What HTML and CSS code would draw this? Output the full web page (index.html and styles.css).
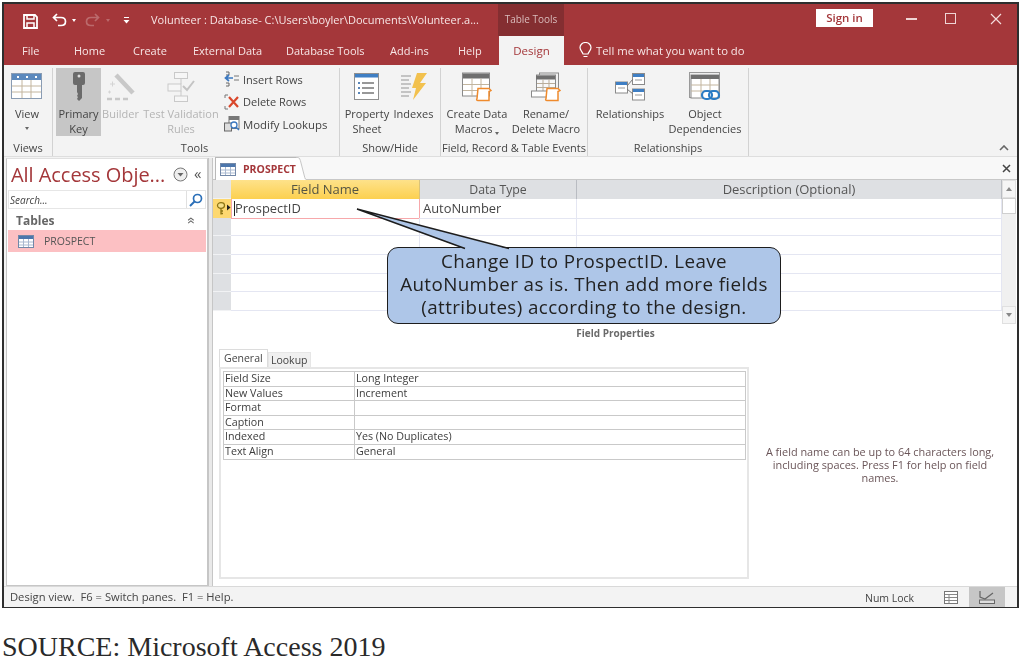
FILE: index.html
```html
<!DOCTYPE html>
<html lang="en">
<head>
<meta charset="utf-8">
<title>Volunteer : Database</title>
<link rel="stylesheet" href="styles.css">
</head>
<body>
<div class="window">
  <header class="titlebar">
    <svg class="qat-save" width="15" height="15" viewBox="0 0 15 15"><path d="M1 1h11l2 2v11H1z" fill="none" stroke="#fff" stroke-width="1.8"/><path d="M4 1v4h7V1" fill="none" stroke="#fff" stroke-width="1.5"/><path d="M4 14V9h7v5" fill="none" stroke="#fff" stroke-width="1.5"/></svg>
    <svg class="qat-undo" width="15" height="14" viewBox="0 0 15 14"><path d="M5 1 1.500 4.500 5 8M2 4.500h7c6 0 6 8 0 8H6" fill="none" stroke="#fff" stroke-width="1.700"/></svg>
    <span class="caret qat-c1"></span>
    <svg class="qat-redo" width="15" height="14" viewBox="0 0 15 14"><path d="M10 1l3.500 3.500L10 8M13 4.500H6c-6 0-6 8 0 8h3" fill="none" stroke="#bb6a6c" stroke-width="1.700"/></svg>
    <span class="caret dim qat-c2"></span>
    <svg class="qat-more" width="7" height="7" viewBox="0 0 7 7"><path d="M1 .5h5" stroke="#fff"/><path d="M.5 3h6L3.500 6.500z" fill="#fff"/></svg>
    <span class="doc-title">Volunteer : Database- C:\Users\boyler\Documents\Volunteer.a...</span>
    <span class="tools-tab">Table Tools</span>
    <span class="signin">Sign in</span>
    <span class="win-min"></span>
    <span class="win-max"></span>
    <svg class="win-close" width="12" height="12" viewBox="0 0 12 12"><path d="M1 1l10 10M11 1 1 11" stroke="#f4dcdc" stroke-width="1.200"/></svg>
  </header>

  <nav class="tabs">
    <span class="tab t-file">File</span>
    <span class="tab t-home">Home</span>
    <span class="tab t-create">Create</span>
    <span class="tab t-ext">External Data</span>
    <span class="tab t-db">Database Tools</span>
    <span class="tab t-add">Add-ins</span>
    <span class="tab t-help">Help</span>
    <span class="tab t-design">Design</span>
    <svg class="bulb" width="13" height="17" viewBox="0 0 13 17"><path d="M4 12C3.500 9.500 1 8.500 1 5.500a5.500 5 0 0 1 11 0C12 8.500 9.500 9.500 9 12zM4.500 14.500h4" fill="none" stroke="#fff" stroke-width="1.200"/></svg>
    <span class="tab t-tell">Tell me what you want to do</span>
  </nav>

  <section class="ribbon">
    <div class="group g-views">
      <div class="group-body">
        <div class="rbtn b-view">
          <svg class="ricon" width="32" height="28" viewBox="0 0 32 28"><rect x=".5" y=".5" width="30" height="25" fill="#fff" stroke="#8a9cb3"/><rect x="1" y="1" width="29" height="6" fill="#5b89bd"/><path d="M1 13h29M1 19h29M11 7v18M20 7v18" stroke="#c3b59e"/><path d="M6 4h2M15 4h2M24 4h2" stroke="#fff" stroke-width="2"/></svg>
          <span class="rlabel">View</span>
          <span class="caret gray"></span>
        </div>
      </div>
      <div class="group-label">Views</div>
    </div>

    <div class="group g-tools">
      <div class="group-body">
        <div class="rbtn b-key active">
          <svg class="ricon" width="16" height="30" viewBox="0 0 16 30"><path d="M2 2q0-2 2-2h8q2 0 2 2v9q0 2-2 2h-1v13l-3 3-2-2 1-2-1-1 1-2-1-2v-7H4q-2 0-2-2z" fill="#6b6b6b"/><circle cx="8" cy="4" r="1.500" fill="#ddd"/></svg>
          <span class="rlabel">Primary</span><span class="rlabel">Key</span>
        </div>
        <div class="rbtn b-builder dim-btn">
          <svg class="ricon" width="30" height="30" viewBox="0 0 30 30"><path d="M10 3l17 18" stroke="#c8c8c8" stroke-width="4.500"/><path d="M4 12h5M6.500 9.500v5M2 20h3M3.500 18.500v3" stroke="#d4d4d4"/><path d="M1 27h5M9 27h5M17 27h5" stroke="#c8c8c8" stroke-width="2.500"/></svg>
          <span class="rlabel">Builder</span>
        </div>
        <div class="rbtn b-test dim-btn">
          <svg class="ricon" width="28" height="30" viewBox="0 0 28 30"><g fill="#f6f6f6" stroke="#c9c9c9"><rect x="7.500" y=".5" width="13" height="6"/><rect x="1" y="12" width="13" height="7"/><rect x="7.500" y="24" width="13" height="5.500"/></g><path d="M14 7v5M14 19v5" stroke="#c9c9c9"/><path d="M16 14l4 4 7-9" fill="none" stroke="#c4c4c4" stroke-width="2"/></svg>
          <span class="rlabel">Test Validation</span><span class="rlabel">Rules</span>
        </div>
        <div class="small-stack">
          <div class="sbtn">
            <svg width="16" height="16" viewBox="0 0 16 16"><path d="M2 1h3v3H2M2 12h3v3H2" fill="none" stroke="#666"/><path d="M9 7H2M5 4 1.500 7 5 10" fill="none" stroke="#3b78c0" stroke-width="1.700"/><path d="M10 5h5M10 9h5" stroke="#777"/></svg>
            <span>Insert Rows</span>
          </div>
          <div class="sbtn">
            <svg width="16" height="16" viewBox="0 0 16 16"><path d="M4 1H1v3M1 12v3h3" fill="none" stroke="#777"/><path d="M5 3l9 10M14 3 5 13" stroke="#d9472b" stroke-width="2.200"/></svg>
            <span>Delete Rows</span>
          </div>
          <div class="sbtn">
            <svg width="16" height="16" viewBox="0 0 16 16"><rect x="5" y=".5" width="10" height="12" fill="#fff" stroke="#777"/><path d="M5 1h10v3H5z" fill="#777"/><rect x=".5" y="7" width="7" height="8" fill="#ddd" stroke="#666"/><circle cx="10" cy="9" r="3" fill="#fff" stroke="#3b78c0" stroke-width="1.300"/><path d="M12 11l3 3" stroke="#3b78c0" stroke-width="1.500"/></svg>
            <span class="wide-text">Modify Lookups</span>
          </div>
        </div>
      </div>
      <div class="group-label tools-label">Tools</div>
    </div>

    <div class="group g-show">
      <div class="group-body">
        <div class="rbtn b-prop">
          <svg class="ricon" width="26" height="28" viewBox="0 0 26 28"><rect x=".5" y=".5" width="24" height="26" fill="#fff" stroke="#8f8f8f"/><rect x="1" y="1" width="23" height="3.500" fill="#3f7fc4"/><path d="M8 10h12M8 15h12M8 20h12" stroke="#777" stroke-width="1.300"/><path d="M4 10h2M4 15h2M4 20h2" stroke="#5a86b8" stroke-width="2"/></svg>
          <span class="rlabel">Property</span><span class="rlabel">Sheet</span>
        </div>
        <div class="rbtn b-idx">
          <svg class="ricon" width="28" height="28" viewBox="0 0 28 28"><path d="M1 3h10M1 7h8M1 11h10M1 15h8M1 19h10M1 23h8" stroke="#b5b5b5" stroke-width="1.300"/><path d="M17 0h10l-7 10h6L13 27l3-12h-4z" fill="#f2c14e"/></svg>
          <span class="rlabel">Indexes</span>
        </div>
      </div>
      <div class="group-label">Show/Hide</div>
    </div>

    <div class="group g-events">
      <div class="group-body">
        <div class="rbtn b-macro">
          <svg class="ricon" width="30" height="29" viewBox="0 0 30 29"><rect x=".5" y=".5" width="27" height="23" fill="#fff" stroke="#8a8a8a"/><rect x="1" y="1" width="26" height="5" fill="#6f6f6f"/><path d="M1 12h26M1 18h26M10 6v18M19 6v18" stroke="#c3b59e"/><path d="M16 16h11l2 2-2 1v9H16q-2 0-1-2z" fill="#fff" stroke="#ef8a2c" stroke-width="1.500"/></svg>
          <span class="rlabel">Create Data</span><span class="rlabel">Macros <i class="caret gray inline"></i></span>
        </div>
        <div class="rbtn b-rename">
          <svg class="ricon" width="30" height="29" viewBox="0 0 30 29"><rect x="8.500" y=".5" width="19" height="17" fill="#f2f2f2" stroke="#8a8a8a"/><rect x="5.500" y="2.500" width="19" height="17" fill="#f8f8f8" stroke="#8a8a8a"/><rect x="5" y="3" width="19" height="4" fill="#6f6f6f"/><path d="M6 11h18M6 15h18M12 7v12M18 7v12" stroke="#b9ad9a"/><rect x=".5" y="18.500" width="20" height="6" fill="#fff" stroke="#8a8a8a"/><path d="M16 16h11l2 2-2 1v9H16q-2 0-1-2z" fill="#fff" stroke="#ef8a2c" stroke-width="1.500"/></svg>
          <span class="rlabel">Rename/</span><span class="rlabel">Delete Macro</span>
        </div>
      </div>
      <div class="group-label">Field, Record &amp; Table Events</div>
    </div>

    <div class="group g-rel">
      <div class="group-body">
        <div class="rbtn b-rels">
          <svg class="ricon" width="30" height="28" viewBox="0 0 30 28"><g fill="#fff" stroke="#8a8a8a"><rect x=".5" y="9" width="12" height="11"/><rect x="17.500" y=".5" width="12" height="11"/><rect x="17.500" y="16" width="12" height="11"/></g><path d="M1 9h11v3H1zM18 1h11v3H18zM18 16h11v3H18z" fill="#3f7fc4"/><path d="M12 13l6-7M12 16l6 5" stroke="#777"/><path d="M3 15h7M20 7h7M20 22h7" stroke="#999"/></svg>
          <span class="rlabel">Relationships</span>
        </div>
        <div class="rbtn b-obj">
          <svg class="ricon" width="32" height="30" viewBox="0 0 32 30"><rect x=".5" y=".5" width="30" height="25" fill="#eee" stroke="#999"/><rect x="2" y="3" width="28" height="23" fill="#fff" stroke="#8a8a8a"/><rect x="2" y="3" width="28" height="4" fill="#6f6f6f"/><path d="M2 13h28M2 19h28M12 7v18M21 7v18" stroke="#c3b59e"/><rect x="13" y="19" width="10" height="8" rx="4" fill="#fff" stroke="#2b7cc4" stroke-width="2.200"/><rect x="20" y="19" width="10" height="8" rx="4" fill="none" stroke="#2b7cc4" stroke-width="2.200"/></svg>
          <span class="rlabel">Object</span><span class="rlabel">Dependencies</span>
        </div>
      </div>
      <div class="group-label">Relationships</div>
    </div>

    <div class="ribbon-rest">
      <svg width="10" height="6" viewBox="0 0 10 6"><path d="M1 5l4-4 4 4" fill="none" stroke="#666" stroke-width="1.600"/></svg>
    </div>
  </section>

  <main class="workspace">
    <aside class="navpane">
      <div class="nav-head">
        <span class="nav-title">All Access Obje...</span>
        <svg width="15" height="15" viewBox="0 0 15 15"><circle cx="7.500" cy="7.500" r="6.500" fill="#eee" stroke="#777"/><path d="M4.500 6h6l-3 3.500z" fill="#666"/></svg>
        <span class="nav-collapse">«</span>
      </div>
      <div class="nav-search">
        <span class="search-text">Search...</span>
        <span class="search-btn"><svg width="14" height="14" viewBox="0 0 14 14"><circle cx="8.500" cy="5.500" r="4" fill="none" stroke="#2b6fb8" stroke-width="1.700"/><path d="M5.500 8.500 1 13" stroke="#2b6fb8" stroke-width="2"/></svg></span>
      </div>
      <div class="nav-section"><span>Tables</span><span class="sec-chev">«</span></div>
      <div class="nav-item">
        <svg class="tbl-icon" width="16" height="13" viewBox="0 0 16 13"><rect x=".5" y=".5" width="15" height="12" fill="#fff" stroke="#7288a8"/><rect x="1" y="1" width="14" height="3" fill="#4c76ac"/><path d="M1 7h14M1 10h14M5.500 4v8M10.500 4v8" stroke="#a9b9d0"/></svg>
        <span>PROSPECT</span>
      </div>
    </aside>
    <div class="splitter"></div>
    <section class="doc">
      <div class="doc-tabs">
        <div class="doc-tab">
          <svg class="tbl-icon" width="16" height="13" viewBox="0 0 16 13"><rect x=".5" y=".5" width="15" height="12" fill="#fff" stroke="#7288a8"/><rect x="1" y="1" width="14" height="3" fill="#4c76ac"/><path d="M1 7h14M1 10h14M5.500 4v8M10.500 4v8" stroke="#a9b9d0"/></svg>
          <span>PROSPECT</span>
          <svg class="tab-end" width="10" height="23" viewBox="0 0 16 23" preserveAspectRatio="none"><path d="M0 0h3q3 0 4 3l7 17q1 2 2 2.500V23H0z" fill="#fff"/><path d="M0 .5h3q3 0 4 3l7 17q1 2 2 2" fill="none" stroke="#b9b9b9"/></svg>
        </div>
        <svg class="doc-close" width="9" height="9" viewBox="0 0 9 9"><path d="M1 1l7 7M8 1 1 8" stroke="#444" stroke-width="1.500"/></svg>
      </div>
      <div class="design">
        <div class="grid">
          <div class="row head">
            <div class="sel corner"></div>
            <div class="hcell current">Field Name</div>
            <div class="hcell h-type">Data Type</div>
            <div class="hcell">Description (Optional)</div>
          </div>
          <div class="row">
            <div class="sel selected">
              <svg width="16" height="14" viewBox="0 0 16 14"><ellipse cx="6" cy="3.500" rx="3.500" ry="2.800" fill="#f5e08a" stroke="#8c7414" stroke-width="1.300"/><path d="M6 6v6.500M6 9h2M6 11.500h2" stroke="#8c7414" stroke-width="1.300" fill="none"/><path d="M12 2.500l3.500 3-3.500 3z" fill="#222"/></svg>
            </div>
            <div class="cell focus"><span class="cursor"></span>ProspectID</div>
            <div class="cell">AutoNumber</div>
            <div class="cell"></div>
          </div>
          <div class="row"><div class="sel"></div><div class="cell"></div><div class="cell"></div><div class="cell"></div></div>
          <div class="row"><div class="sel"></div><div class="cell"></div><div class="cell"></div><div class="cell"></div></div>
          <div class="row"><div class="sel"></div><div class="cell"></div><div class="cell"></div><div class="cell"></div></div>
          <div class="row"><div class="sel"></div><div class="cell"></div><div class="cell"></div><div class="cell"></div></div>
          <div class="row"><div class="sel"></div><div class="cell"></div><div class="cell"></div><div class="cell"></div></div>
        </div>
        <div class="scrollbar">
          <span class="sb-btn"><i class="arrow-up"></i></span>
          <span class="sb-thumb"></span>
          <span class="sb-track"></span>
          <span class="sb-btn"><i class="arrow-down"></i></span>
        </div>
      </div>

      <div class="fp-title">Field Properties</div>
      <div class="props">
        <div class="prop-left">
          <div class="prop-tabs">
            <span class="ptab on">General</span>
            <span class="ptab">Lookup</span>
          </div>
          <div class="prop-box">
            <div class="prop-table">
              <div class="prow"><span>Field Size</span><span>Long Integer</span></div>
              <div class="prow"><span>New Values</span><span>Increment</span></div>
              <div class="prow"><span>Format</span><span></span></div>
              <div class="prow"><span>Caption</span><span></span></div>
              <div class="prow"><span>Indexed</span><span>Yes (No Duplicates)</span></div>
              <div class="prow"><span>Text Align</span><span>General</span></div>
            </div>
          </div>
        </div>
        <p class="help">A field name can be up to 64 characters long, including spaces. Press F1 for help on field names.</p>
      </div>

      <div class="callout">
        <svg class="callout-tail" width="170" height="44" viewBox="0 0 170 44"><path d="M1 1 109 41h44z" fill="#aec6e8"/><path d="M109 40.500 1 1 153 40.500" fill="none" stroke="#1d1d1d" stroke-width="1.500"/></svg>
        <div class="callout-line">Change ID to ProspectID. Leave</div>
        <div class="callout-line">AutoNumber as is. Then add more fields</div>
        <div class="callout-line">(attributes) according to the design.</div>
      </div>
    </section>
  </main>

  <footer class="status">
    <span class="status-text">Design view.&nbsp; F6 = Switch panes.&nbsp; F1 = Help.</span>
    <span class="numlock">Num Lock</span>
    <span class="view-btn"><svg width="14" height="13" viewBox="0 0 14 13"><rect x=".5" y=".5" width="13" height="12" fill="#fff" stroke="#777"/><path d="M1 3.500h12M5 3.500v9M1 6.500h12M1 9.500h12" stroke="#888"/></svg></span>
    <span class="view-btn on"><svg width="16" height="14" viewBox="0 0 16 14"><path d="M1 1v6l5 2 8-6" fill="none" stroke="#666" stroke-width="1.200"/><rect x=".5" y="10" width="15" height="3.500" fill="#ddd" stroke="#666"/></svg></span>
  </footer>
</div>
<p class="source">SOURCE: Microsoft Access 2019</p>
</body>
</html>
```

FILE: styles.css
```css
* { box-sizing: border-box; }
html, body { margin: 0; padding: 0; }
body {
  width: 1020px;
  height: 659px;
  overflow: hidden;
  background: #fff;
  font-family: "Open Sans", "Noto Sans", sans-serif;
  color: #444;
}
.window {
  width: 1017px;
  height: 606px;
  margin: 2px 0 0 2px;
  border: 2px solid #2e2e2e;
  border-bottom-width: 1.500px;
  display: flex;
  flex-direction: column;
  background: #f3f3f3;
  position: relative;
  filter: blur(.35px);
}

/* title bar */
.titlebar {
  height: 32px;
  flex: none;
  background: #a4373a;
  display: flex;
  align-items: center;
  color: #f7e6e6;
  font-size: 11px;
}
.qat-save { margin-left: 19px; margin-top: 2px; }
.qat-undo { margin-left: 14px; }
.caret {
  display: inline-block;
  width: 0; height: 0;
  border-left: 2.500px solid transparent;
  border-right: 2.500px solid transparent;
  border-top: 3px solid #fff;
}
.caret.dim { border-top-color: #bb6a6c; }
.caret.gray { border-top-color: #666; }
.caret.inline { vertical-align: middle; }
.qat-c1 { margin-left: 5px; }
.qat-redo { margin-left: 9px; }
.qat-c2 { margin-left: 6px; }
.qat-more { margin-left: 13px; }
.doc-title { margin-left: 21px; width: 347px; white-space: nowrap; margin-top: -2px; }
.tools-tab {
  width: 66px;
  height: 32px;
  line-height: 31px;
  text-align: center;
  background: #842e31;
  color: #d9bcbc;
  font-size: 10px;
}
.signin {
  margin-left: 252px;
  width: 57px;
  height: 18px;
  margin-top: -4px;
  background: #fff;
  color: #a4373a;
  text-align: center;
  line-height: 18px;
  font-size: 11.500px;
  font-weight: 600;
}
.win-min { width: 11px; height: 1.500px; background: #f0d5d5; margin-left: 33px; margin-top: -2px; }
.win-max { width: 11px; height: 11px; border: 1.200px solid #f0d5d5; margin-left: 28px; margin-top: -3px; }
.win-close { margin-left: 34px; margin-top: -3px; }

/* tabs */
.tabs {
  height: 29px;
  flex: none;
  background: #a4373a;
  display: flex;
  align-items: center;
  color: #f7e6e6;
  font-size: 11px;
  white-space: nowrap;
}
.tab { display: block; }
.t-file { margin-left: 18px; width: 52px; }
.t-home { width: 59px; }
.t-create { width: 60px; }
.t-ext { width: 93px; }
.t-db { width: 104px; }
.t-add { width: 68px; }
.t-help { width: 41px; }
.t-design {
  width: 65px;
  height: 29px;
  line-height: 29px;
  text-align: center;
  background: #f3f3f3;
  color: #a4373a;
  font-size: 11.500px;
}
.bulb { margin-left: 15px; }
.t-tell { margin-left: 4px; font-size: 11.300px; }

/* ribbon */
.ribbon {
  height: 92px;
  flex: none;
  display: flex;
  background: #f3f3f3;
  border-bottom: 1px solid #dedede;
  font-size: 11px;
  color: #444;
}
.group {
  display: flex;
  flex-direction: column;
  margin: 3px 0 0;
  border-right: 1px solid #d2d2d2;
  flex: none;
}
.g-views { width: 49px; }
.g-tools { width: 287px; padding-left: 3px; }
.g-show { width: 101px; }
.g-events { width: 147px; }
.g-rel { width: 161px; }
.group-body { flex: 1; display: flex; min-height: 0; }
.group-label {
  height: 16px;
  flex: none;
  line-height: 16px;
  text-align: center;
  font-size: 11px;
  white-space: nowrap;
}
.tools-label { padding-right: 6px; }
.rbtn {
  display: flex;
  flex-direction: column;
  align-items: center;
  height: 68px;
  flex: none;
  white-space: nowrap;
}
.ricon { height: 32px; margin-top: 3px; margin-bottom: 3px; flex: none; }
.rlabel { height: 15px; line-height: 15px; display: block; }
.rbtn .caret.gray { margin-top: 6px; }
.b-view { width: 38px; margin-left: 4px; }
.b-key { width: 45px; }
.active { background: #c6c6c6; }
.b-builder { width: 39px; }
.b-test { width: 78px; margin-left: 2px; }
.dim-btn { color: #b4b4b4; }
.small-stack { margin-left: 4px; display: flex; flex-direction: column; }
.sbtn { height: 22.500px; display: flex; align-items: center; gap: 3px; white-space: nowrap; }
.wide-text { font-size: 11.400px; }
.b-prop { width: 52px; margin-left: 1px; }
.b-idx { width: 41px; }
.b-macro { width: 68px; margin-left: 2px; }
.b-rename { width: 70px; }
.b-rels { width: 78px; margin-left: 3px; }
.b-obj { width: 72px; }
.ribbon-rest {
  flex: 1;
  display: flex;
  align-items: flex-end;
  justify-content: flex-end;
  padding: 0 8px 5px 0;
}

/* workspace */
.workspace { flex: 1; display: flex; min-height: 0; position: relative; }
.navpane {
  width: 202px;
  margin-left: 2px;
  flex: none;
  background: #fff;
  border: 1px solid #c6c6c6;
  border-top-color: #e0e0e0;
  padding: 0 1px;
  margin-top: 1px;
}
.nav-head {
  height: 31px;
  display: flex;
  align-items: center;
  padding-left: 3px;
  color: #a4373a;
}
.nav-title { font-size: 20px; width: 162px; white-space: nowrap; letter-spacing: -.05px; }
.nav-collapse { margin-left: 6px; font-size: 15px; color: #555; margin-top: -3px; }
.nav-search {
  height: 19px;
  display: flex;
  align-items: center;
  border: 1px solid #e6e6e6;
  background: #fff;
}
.search-text { flex: 1; font-size: 10px; font-style: italic; color: #444; padding-left: 1px; }
.search-btn { width: 19px; height: 17px; border-left: 1px solid #e0e0e0; display: flex; align-items: center; justify-content: center; }
.nav-section {
  height: 21px;
  display: flex;
  align-items: center;
  justify-content: space-between;
  padding: 1px 10px 0 8px;
  font-size: 12px;
  font-weight: 700;
  color: #666;
}
.sec-chev { display: inline-block; transform: rotate(90deg); font-weight: 400; font-size: 14px; }
.nav-item {
  height: 22px;
  display: flex;
  align-items: center;
  gap: 10px;
  padding-left: 10px;
  background: #fcc0c3;
  font-size: 10.500px;
  color: #555;
}
.splitter {
  width: 5px;
  flex: none;
  background: #e9e9e9;
  border-left: 1px solid #c6c6c6;
  border-right: 1px solid #c6c6c6;
  margin-top: 1px;
}
.doc { flex: 1; display: flex; flex-direction: column; background: #fff; position: relative; min-width: 0; }

.doc-tabs {
  height: 23px;
  flex: none;
  display: flex;
  align-items: flex-start;
  justify-content: space-between;
  background: #f8f8f8;
  border-bottom: 1px solid #c8c8c8;
  padding: 0 6px 0 2px;
}
.doc-tab {
  width: 81px;
  height: 23px;
  background: #fff;
  display: flex;
  align-items: center;
  gap: 7px;
  padding-left: 4px;
  font-size: 10.500px;
  font-weight: 700;
  color: #a4373a;
  border-top: 1px solid #b9b9b9;
  border-left: 1px solid #b9b9b9;
  position: relative;
  white-space: nowrap;
}
.tbl-icon { flex: none; }
.tab-end { position: absolute; left: 80px; top: -1px; }
.doc-close { margin-top: 7px; }

.design { display: flex; height: 144px; flex: none; }
.grid { flex: 1; min-width: 0; overflow: hidden; }
.row {
  display: grid;
  grid-template-columns: 18px 189px 157px 1fr;
  height: 18.700px;
}
.row.head { height: 19px; }
.sel {
  background: #dee0e3;
  border-bottom: 1px solid #f1f2f4;
  display: flex;
  align-items: center;
  padding-left: 2px;
}
.sel.corner { background: #e6e6e6; }
.sel.selected { background: #fdd870; }
.hcell {
  background: #dee0e3;
  text-align: center;
  font-size: 13px;
  line-height: 19px;
  color: #555;
  border-right: 1px solid #b9bcc2;
}
.hcell.h-type { font-size: 12.300px; }
.hcell.current { background: linear-gradient(#fee28a, #fcd050); color: #554; border-right-color: #d9c37a; }
.cell {
  border-bottom: 1.500px solid #e4e6f2;
  border-right: 1.500px solid #e4e6f2;
  font-size: 12.900px;
  line-height: 19px;
  padding-left: 3px;
  color: #444;
}
.cell.focus { border: 1.500px solid #f7a8ab; border-top-width: 0; padding-left: 2px; }
.cursor { display: inline-block; width: 1px; height: 15px; background: #222; vertical-align: -3px; }
.scrollbar {
  width: 14px;
  flex: none;
  display: flex;
  flex-direction: column;
  background: #f0f0f0;
  margin-right: 1px;
}
.sb-btn { height: 18px; display: flex; align-items: center; justify-content: center; background: #f5f5f5; border: 1px solid #e0e0e0; flex: none; }
.sb-thumb { height: 16px; background: #fff; border: 1px solid #cfcfcf; flex: none; }
.sb-track { flex: 1; }
.arrow-up, .arrow-down { width: 0; height: 0; border-left: 3.500px solid transparent; border-right: 3.500px solid transparent; }
.arrow-up { border-bottom: 4px solid #888; }
.arrow-down { border-top: 4px solid #888; }

.fp-title {
  height: 21px;
  flex: none;
  text-align: center;
  line-height: 19px;
  font-size: 10px;
  font-weight: 700;
  color: #6a6a6a;
  margin-left: 1px;
}
.props { flex: 1; display: flex; min-height: 0; padding-left: 6px; }
.prop-left { width: 530px; flex: none; display: flex; flex-direction: column; }
.prop-tabs { height: 22px; flex: none; display: flex; align-items: flex-end; }
.ptab {
  height: 15px;
  line-height: 14px;
  padding: 0 2px;
  font-size: 10.500px;
  background: #f0f0f0;
  border: 1px solid #e6e6e6;
  border-bottom: 0;
  color: #444;
}
.ptab.on { height: 18px; line-height: 16px; width: 49px; background: #fff; padding: 0 4px; border-color: #dcdcdc; }
.prop-box { height: 212px; flex: none; border: 2px solid #e6e6e6; padding: 2px 1px 2px 2px; background: #fff; }
.prop-table { border: 1px solid #c9c9c9; border-width: 1px 1px 0 1px; }
.prow {
  display: grid;
  grid-template-columns: 130px 1fr;
  height: 14.600px;
  border-bottom: 1.500px solid #c9c9c9;
  font-size: 10.700px;
  line-height: 13px;
  color: #3c3c3c;
}
.prow span { padding-left: 1px; white-space: nowrap; }
.prow span + span { border-left: 1px solid #c9c9c9; }
.help {
  margin: 100px 0 0 11px;
  width: 240px;
  font-size: 10.900px;
  line-height: 13px;
  text-align: center;
  color: #6a5558;
}

/* callout */
.callout {
  position: absolute;
  left: 174px;
  top: 90px;
  width: 394px;
  height: 77px;
  border: 1.500px solid #1d1d1d;
  border-radius: 11px;
  background: #aec6e8;
  text-align: center;
  font-size: 18.800px;
  letter-spacing: .4px;
  color: #222;
  padding-top: 2px;
  white-space: nowrap;
}
.callout-line { height: 23px; line-height: 23px; position: relative; }
.callout-tail { position: absolute; left: -32.500px; top: -40px; }

/* status */
.status {
  height: 21px;
  flex: none;
  display: flex;
  align-items: center;
  background: #f3f3f3;
  border-top: 1px solid #d9d9d9;
  font-size: 10.500px;
  color: #444;
}
.status-text { margin-left: 6px; width: 855px; white-space: nowrap; font-size: 11.200px; margin-top: -2px; }
.numlock { width: 68px; white-space: nowrap; margin-top: 1px; }
.view-btn { width: 36px; height: 20px; display: flex; align-items: center; justify-content: center; }
.view-btn.on { background: #c6c6c6; }

.source {
  margin: 27px 0 0 2px;
  font-family: "Liberation Serif", serif;
  font-size: 28px;
  line-height: 24px;
  color: #2a2a2a;
  white-space: nowrap;
}
```
